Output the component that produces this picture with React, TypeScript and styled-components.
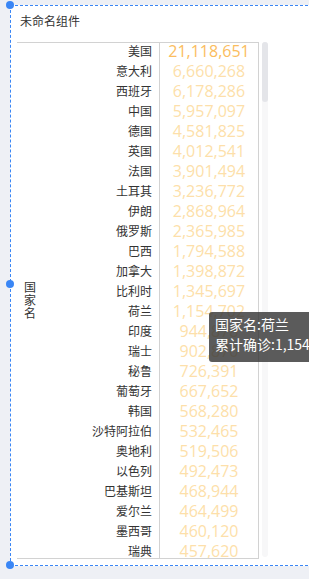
import React from "react";
import styled, { createGlobalStyle } from "styled-components";

const GlobalStyle = createGlobalStyle`
    html, body {
        margin: 0;
        padding: 0;
        background: #eef0f5;
        overflow: hidden;
    }
    body {
        font-family: "Noto Sans CJK SC", "Liberation Sans", sans-serif;
    }
`;

const Page = styled.div`
    width: 309px;
    height: 579px;
    padding: 5px 0 0 10px;
    box-sizing: border-box;
    overflow: hidden;
`;

const Frame = styled.div`
    position: relative;
    width: 340px;
    height: 559px;
    background: #ffffff;
    border: 1px dashed #3a86f5;
    padding: 0 0 0 6px;
    box-sizing: content-box;
`;

const Handle = styled.span<{ $top: number }>`
    position: absolute;
    left: -5px;
    top: ${({ $top }) => $top}px;
    width: 8px;
    height: 8px;
    border-radius: 50%;
    background: #3a86f5;
`;

const Title = styled.div`
    padding: 7px 0 0 3px;
    height: 16px;
    line-height: 16px;
    font-size: 12px;
    color: #333;
`;

const Body = styled.div`
    display: flex;
    gap: 3px;
    margin-top: 13px;
    align-items: flex-start;
`;

const Table = styled.div`
    width: 241px;
    height: 515px;
    border-top: 1px solid #d2d2d2;
    border-bottom: 1px solid #d2d2d2;
    border-right: 1px solid #d2d2d2;
    overflow: hidden;
    display: flex;
`;

const GroupCell = styled.div`
    width: 26px;
    display: flex;
    align-items: center;
    justify-content: center;
`;

const GroupText = styled.span`
    writing-mode: vertical-rl;
    text-orientation: upright;
    font-size: 12px;
    letter-spacing: 1px;
    color: #333;
`;

const Rows = styled.div`
    flex: 1;
    margin-top: -2px;
`;

const Row = styled.div`
    display: grid;
    grid-template-columns: 117px 1fr;
    height: 20px;
`;

const Name = styled.div`
    border-right: 1px solid #d2d2d2;
    padding-right: 7px;
    text-align: right;
    font-size: 12px;
    line-height: 20px;
    color: #333;
`;

const Value = styled.div<{ $color: string }>`
    text-align: center;
    font-family: "Open Sans", "Liberation Sans", sans-serif;
    font-size: 16px;
    line-height: 20px;
    color: ${({ $color }) => $color};
`;

const Track = styled.div`
    width: 6px;
    height: 515px;
    border-radius: 3px;
    background: #f7f7f8;
    display: flex;
    flex-direction: column;
`;

const Thumb = styled.div`
    height: 60px;
    border-radius: 3px;
    background: #e4e5e9;
`;

const Tooltip = styled.div`
    position: absolute;
    left: 198px;
    top: 306px;
    padding: 2px 14px 8px 6px;
    border-radius: 3px;
    background: rgba(50, 50, 50, 0.8);
    color: #fff;
    font-size: 14px;
    line-height: 20px;
    white-space: nowrap;
`;

const data: [string, number][] = [
    ["美国", 21118651],
    ["意大利", 6660268],
    ["西班牙", 6178286],
    ["中国", 5957097],
    ["德国", 4581825],
    ["英国", 4012541],
    ["法国", 3901494],
    ["土耳其", 3236772],
    ["伊朗", 2868964],
    ["俄罗斯", 2365985],
    ["巴西", 1794588],
    ["加拿大", 1398872],
    ["比利时", 1345697],
    ["荷兰", 1154702],
    ["印度", 944878],
    ["瑞士", 902870],
    ["秘鲁", 726391],
    ["葡萄牙", 667652],
    ["韩国", 568280],
    ["沙特阿拉伯", 532465],
    ["奥地利", 519506],
    ["以色列", 492473],
    ["巴基斯坦", 468944],
    ["爱尔兰", 464499],
    ["墨西哥", 460120],
    ["瑞典", 457620],
];

const fmt = (n: number) => n.toLocaleString("en-US");
const colorFor = (n: number) => (n > 10000000 ? "#fbbd5e" : "#fddfaa");

export default function App() {
    return (
        <>
            <GlobalStyle />
            <Page>
                <Frame>
                    <Handle $top={-5} />
                    <Handle $top={274} />
                    <Handle $top={555} />
                    <Title>未命名组件</Title>
                    <Body>
                        <Table>
                            <GroupCell>
                                <GroupText>国家名</GroupText>
                            </GroupCell>
                            <Rows>
                                {data.map(([name, value]) => (
                                    <Row key={name}>
                                        <Name>{name}</Name>
                                        <Value $color={colorFor(value)}>{fmt(value)}</Value>
                                    </Row>
                                ))}
                            </Rows>
                        </Table>
                        <Track>
                            <Thumb />
                        </Track>
                    </Body>
                    <Tooltip>
                        <div>国家名:荷兰</div>
                        <div>累计确诊:1,154,702</div>
                    </Tooltip>
                </Frame>
            </Page>
        </>
    );
}
